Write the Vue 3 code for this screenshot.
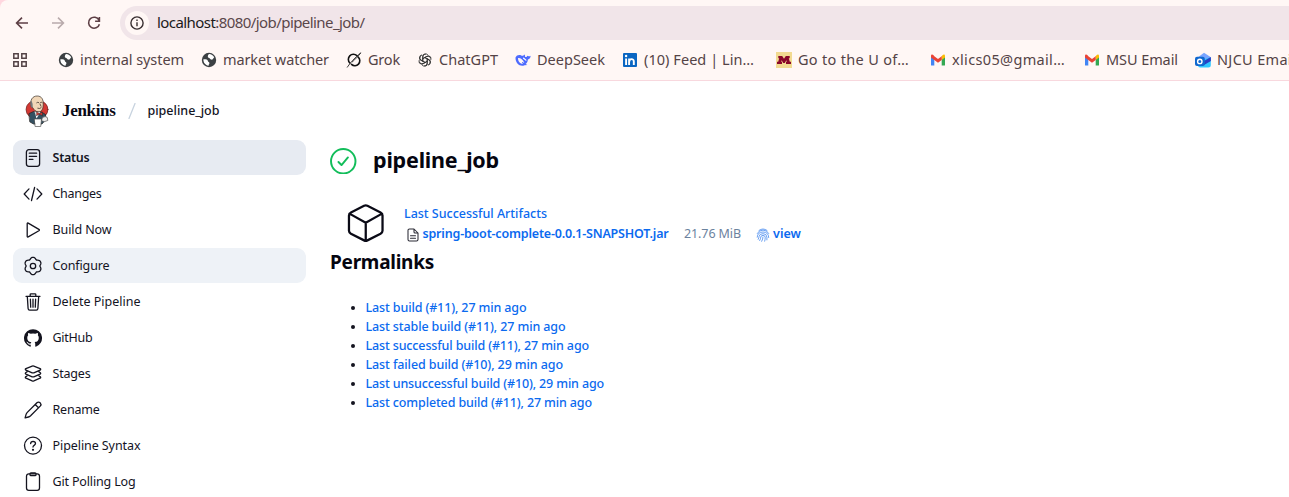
<script setup>
const bookmarks = [
  { icon: 'globe', text: 'internal system', w: 104, step: 143 },
  { icon: 'globe', text: 'market watcher', w: 106, step: 145 },
  { icon: 'grok', text: 'Grok', w: 32, step: 71 },
  { icon: 'gpt', text: 'ChatGPT', w: 59, step: 98 },
  { icon: 'deepseek', text: 'DeepSeek', w: 68, step: 107 },
  { icon: 'linkedin', text: '(10) Feed | Lin…', w: 110, step: 154 },
  { icon: 'umn', text: 'Go to the U of…', w: 111, step: 154 },
  { icon: 'gmail', text: 'xlics05@gmail…', w: 113, step: 154 },
  { icon: 'gmail', text: 'MSU Email', w: 72, step: 111 },
  { icon: 'outlook', text: 'NJCU Email', w: 79, step: 110 },
]
const tasks = [
  { icon: 'status', text: 'Status', w: 37, state: 'active' },
  { icon: 'changes', text: 'Changes', w: 49 },
  { icon: 'play', text: 'Build Now', w: 59 },
  { icon: 'gear', text: 'Configure', w: 57, state: 'hover' },
  { icon: 'trash', text: 'Delete Pipeline', w: 88 },
  { icon: 'github', text: 'GitHub', w: 40 },
  { icon: 'stages', text: 'Stages', w: 38 },
  { icon: 'pen', text: 'Rename', w: 47 },
  { icon: 'help', text: 'Pipeline Syntax', w: 88 },
  { icon: 'clip', text: 'Git Polling Log', w: 83 },
]
const permalinks = [
  { text: 'Last build (#11), 27 min ago', w: 161 },
  { text: 'Last stable build (#11), 27 min ago', w: 200 },
  { text: 'Last successful build (#11), 27 min ago', w: 223.5 },
  { text: 'Last failed build (#10), 29 min ago', w: 197.5 },
  { text: 'Last unsuccessful build (#10), 29 min ago', w: 238.5 },
  { text: 'Last completed build (#11), 27 min ago', w: 226.5 },
]
// Six-lobed outline of the settings cog.
const cog = Array.from({ length: 72 }, (_, i) => {
  const t = (i * Math.PI) / 36
  const r = 7.9 + 0.85 * Math.cos(6 * t) - 0.15 * Math.cos(12 * t)
  return `${(10 + r * Math.sin(t)).toFixed(2)},${(10 - r * Math.cos(t)).toFixed(2)}`
}).join(' ')
// Tracks a label so that it fills the given width.
const vFit = {
  mounted(el, { value }) {
    const natural = el.getBoundingClientRect().width
    el.style.letterSpacing = (value - natural) / el.textContent.length + 'px'
  },
}
</script>

<template>
  <div class="page">
    <header class="chrome">
      <div class="toolbar">
        <svg class="nav" viewBox="0 0 16 16"><path d="M14 8H3M8 2.6 2.6 8 8 13.4" /></svg>
        <svg class="nav dim" viewBox="0 0 16 16"><path d="M2 8h11M8 2.6 13.4 8 8 13.4" /></svg>
        <svg class="nav" viewBox="0 0 16 16"><path d="M13 5.2A5.5 5.5 0 1 0 13.4 9.2M13.4 2v4.3H9.1" /></svg>
        <div class="address">
          <span class="info">
            <svg viewBox="0 0 16 16"><circle cx="8" cy="8" r="6.1" /><path d="M8 7.2v4M8 4.6v1.500" /></svg>
          </span>
          <span v-fit="207.5" class="url"><b>localhost</b>:8080/job/pipeline_job/</span>
        </div>
      </div>
      <nav class="bookmarks">
        <svg class="apps" viewBox="0 0 16 16"><path d="M1.8 1.8h4.4v4.4H1.8zM9.8 1.8h4.4v4.4H9.8zM1.8 9.8h4.4v4.4H1.8zM9.8 9.8h4.4v4.4H9.8z" /></svg>
        <i class="sep"></i>
        <div v-for="(b, i) in bookmarks" :key="i" class="bookmark" :style="{ width: b.step + 'px' }">
          <svg class="fav" viewBox="0 0 16 16">
            <g v-if="b.icon === 'globe'">
              <circle cx="8" cy="8" r="7.2" fill="#3c4043" />
              <path d="M2.4 7.2c2.2-.1 4.200.1 4.400 1.500.2 1.500 1.400.9 1.600 2.200.1 1-.8 1.200-.8 2.800-3.200-.5-5.400-3.200-5.200-6.500ZM8 2.100c2.300 0 4.300 1.300 5.200 3.200-.9 1.300-1.400 2.600-3 2.300-1.300-.2-.9-1.600-2.300-1.700C6.300 5.700 6.500 3.400 8 2.100Z" fill="#fff" />
            </g>
            <g v-else-if="b.icon === 'grok'" fill="none" stroke="#111">
              <path d="M10.900 3.700A4.900 4.900 0 0 0 3.900 11M5.500 12.400A4.900 4.900 0 0 0 12.200 5.100" stroke-width="1.600" />
              <path d="M1.300 15.200C4 11 9 5.500 14.800.8 12.500 4 9.500 7 6.300 9.900" stroke-width=".8" />
            </g>
            <g v-else-if="b.icon === 'gpt'" fill="none" stroke="#333" stroke-width="1">
              <path v-for="a in 6" :key="a" :transform="`rotate(${a * 60} 8 8) translate(.8 .8) scale(.9)`" d="M5.600 9.300V4.300A3.100 3.100 0 0 1 11 2.200M5.700 6.500 9.800 4.100A3.100 3.100 0 0 1 14 5.300" />
            </g>
            <g v-else-if="b.icon === 'deepseek'">
              <path d="M.5 5.500C1.500 3 4.200 2.500 6.200 3.400c1.300.6 2.400.5 3-.9.8.4 1 1.400.8 2.200 1 .8 1.900.4 2.300-.9.9.6 2 .7 3.300-.1-.1 2.200-1 3.300-2.700 3.700-.2 2-1 3.600-2.300 4.700l1.800 1-2.900.1C5.500 15.200.2 11.500.5 5.500Z" fill="#4d6bfe" />
              <path d="M3 6c2.600-.2 4.900 1.300 6.300 4.800-1-.3-1.600-.9-2.300-.9.1 1 .8 1.400 1 2C5.200 11.800 3 9.500 3 6Z" fill="#fff6f5" />
              <path d="m8.600 6.200 2.300 1.900" stroke="#fff" stroke-width="1.200" />
            </g>
            <g v-else-if="b.icon === 'linkedin'">
              <rect x="1" y="1" width="14" height="14" rx="1" fill="#0a66c2" />
              <path d="M4.100 6.400v6.500M7.100 13V6.400M7.200 9.700c0-3.300 4.600-3.500 4.600-.3V13" fill="none" stroke="#fff" stroke-width="1.900" stroke-linecap="butt" />
              <circle cx="4.100" cy="4" r="1.200" fill="#fff" />
            </g>
            <g v-else-if="b.icon === 'umn'">
              <path d="M0 0h16v16H0z" fill="#f2da91" />
              <path d="M2.300 4h3.900L8 6.800 9.800 4h3.900v2.300h-.9l1 3.500h1.200V12h-5V9.800h.8l-.4-1.600L8.800 11H7.200L5.600 8.200l-.4 1.600H6V12H1V9.800h1.200l1-3.500h-.9Z" fill="#8a0829" />
            </g>
            <g v-else-if="b.icon === 'gmail'">
              <path d="M1 4v9q0 .5.6.5h2.700V6.500Z" fill="#4285f4" />
              <path d="M15 4v9q0 .5-.6.500h-2.700V6.500Z" fill="#34a853" />
              <path d="M11.700 4.200v3.700L15 5.400V4c0-1.600-1.400-1.900-2.300-1Z" fill="#fbbc04" />
              <path d="m4.300 4.200 3.700 2.800 3.700-2.800v3.700L8 10.700 4.300 7.900 1 5.400V4c0-1.600 1.400-1.900 2.300-1Z" fill="#ea4335" />
            </g>
            <g v-else>
              <path d="M3 5.200 9 .8l6.200 4v2L9 11 3 8Z" fill="#7aa5ff" />
              <path d="M3 9 15.800 5.300V13q0 2.500-2.500 2.500H5Q3 15.500 3 13Z" fill="#30c7ff" />
              <path d="M8 9.500 15.900 5v4L9 13Z" fill="#293fc4" />
              <rect x="0" y="4.800" width="9.800" height="9.200" rx="2" fill="#1068cf" />
              <circle cx="4.800" cy="9.400" r="2.200" fill="none" stroke="#fff" stroke-width="1.400" />
            </g>
          </svg>
          <span v-fit="b.w">{{ b.text }}</span>
        </div>
      </nav>
    </header>

    <div class="crumbs">
      <svg class="butler" viewBox="0 0 24 32">
        <ellipse cx="12" cy="14.500" rx="11" ry="9.500" fill="#d33833" stroke="#5a2220" stroke-width=".6" />
        <path d="M4.200 18.500 8.500 16.500l8 .5 4 2.500.5 5-4 4.500H8.500L5 27Z" fill="#335061" stroke="#222" stroke-width=".7" />
        <path d="m9.500 16.500 2 7 4-6.500Z" fill="#fff" />
        <path d="M6.200 11.500C4.500 5 7.500 1 12.200 1c4.800 0 6.300 4 6 8.500 0 4.800-1.700 7.300-4.400 7.300-3.300 0-4.700-1.800-6-4Z" fill="#f0d6b7" stroke="#3a302a" stroke-width=".7" />
        <path d="M6.100 5.500C5 8 5.300 11 6.500 12.800l1.300-.6-.2-3.200L7 7Z" fill="#77787b" />
        <path d="M11.700 7.700q1-.9 2-.2M15.500 7.500q1-.7 1.700 0M12.800 13.300q2 .8 3.300-.5M15 9l1 2.200" fill="none" stroke="#3a302a" stroke-width=".8" />
        <path d="m11.500 17 2.800 1.500L17.500 17v3.600l-3.200-1.200L11.500 20.500Z" fill="#d33833" stroke="#222" stroke-width=".5" />
        <path d="M9.500 24h7l-.8 7.500h-5.200Z" fill="#fff" stroke="#555" stroke-width=".7" />
        <path d="M17.500 22.500q3-2 4.800 0l.5 3-3.500 1.200-2.500-1Z" fill="#eee" stroke="#555" stroke-width=".7" />
      </svg>
      <strong v-fit="53.5" class="brand">Jenkins</strong>
      <svg class="slash" viewBox="0 0 8 16"><path d="M7 .5 1 15.500" /></svg>
      <span v-fit="72" class="crumb">pipeline_job</span>
    </div>

    <div class="body">
      <aside class="tasks">
        <a v-for="t in tasks" :key="t.text" class="task" :class="t.state">
          <svg class="task-icon" viewBox="0 0 20 20">
            <g v-if="t.icon === 'status'"><rect x="3.400" y="1.700" width="13.200" height="16.600" rx="2.500" /><path d="M6.300 5.200h7.300M6.300 8.300h7.300M6.300 11.400h3.600" /></g>
            <path v-else-if="t.icon === 'changes'" d="M6 4.900 1.200 10 6 15.100M14 4.900 18.800 10 14 15.100M11.600 3.500 8.500 16.500" />
            <path v-else-if="t.icon === 'play'" d="M4.200 3.700v12.600q0 1 1 .6l10.700-6.200q1-.7 0-1.300L5.200 3.100q-1-.4-1 .6Z" />
            <g v-else-if="t.icon === 'gear'"><circle cx="10" cy="10" r="2.700" /><polygon :points="cog" /></g>
            <path v-else-if="t.icon === 'trash'" d="M3 4.300h14M4.300 4.300l.8 12.200q.1 1.700 1.600 1.700h6.600q1.500 0 1.600-1.700l.8-12.200M7.200 4V2.600q0-.8.8-.8h4q.8 0 .8.800V4M10 7.200v8M7.400 7.200l.3 8M12.600 7.200l-.3 8" />
            <path v-else-if="t.icon === 'github'" class="solid" d="M10 1.200a9 9 0 0 0-2.850 17.540c.450.080.610-.200.610-.430v-1.680c-2.500.540-3.030-1.070-3.030-1.070-.410-1.040-1-1.310-1-1.310-.820-.560.060-.550.060-.550.900.060 1.380.930 1.380.930.800 1.380 2.110.980 2.620.750.080-.580.310-.980.570-1.200-2-.230-4.100-1-4.100-4.450 0-.980.350-1.790.930-2.420-.100-.230-.400-1.140.090-2.380 0 0 .760-.240 2.480.920a8.600 8.600 0 0 1 4.500 0c1.720-1.160 2.470-.920 2.470-.920.500 1.240.190 2.150.100 2.380.570.630.920 1.440.920 2.420 0 3.460-2.100 4.220-4.110 4.440.320.280.610.830.610 1.670v2.470c0 .240.160.520.620.430A9 9 0 0 0 10 1.200Z" />
            <path v-else-if="t.icon === 'stages'" d="M9.200 2.100q.8-.3 1.600 0l6.300 2.500q1.200.7 0 1.600L10.800 8.800q-.8.300-1.600 0L2.900 6.200q-1.200-.9 0-1.600ZM4 7.900l-1.100.6q-1.200.9 0 1.600l6.300 2.700q.8.300 1.600 0l6.300-2.700q1.200-.7 0-1.600L16 7.900M4 12l-1.100.6q-1.200.9 0 1.600l6.300 2.700q.8.300 1.600 0l6.300-2.700q1.200-.7 0-1.600L16 12" />
            <path v-else-if="t.icon === 'pen'" d="M12.200 4.500 4.300 12.400Q3.300 13.500 3 14.600L2.100 17.900 5.400 17Q6.500 16.700 7.600 15.700L17.200 6.100Q18.700 4.500 17.300 2.900 15.500 1.300 13.900 2.800ZM12.200 4.500 15.500 7.800" />
            <g v-else-if="t.icon === 'help'"><circle cx="10" cy="9.600" r="8.500" /><path d="M7.600 7.600q.1-2.300 2.500-2.300 2.300.1 2.400 2 .1 1-1.100 1.800-1.400.8-1.400 2" /><circle class="solid" cx="10" cy="13.800" r="1.100" /></g>
            <g v-else><rect x="3.500" y="1.900" width="13" height="16.500" rx="2.300" /><path d="M7 1.900q0-.9 1-.9h4q1 0 1 .9v.8q0 1-1 1H8q-1 0-1-1Z" /></g>
          </svg>
          <span v-fit="t.w">{{ t.text }}</span>
        </a>
      </aside>

      <main class="main">
        <h1>
          <svg class="ok" viewBox="0 0 26 26"><circle cx="13" cy="13" r="12" /><path d="m8.300 13.700 3 3 6.300-7.400" /></svg>
          <span v-fit="126">pipeline_job</span>
        </h1>
        <section class="artifacts">
          <svg class="cube" viewBox="0 0 38 38"><path d="M17.300 1.500q1.700-.8 3.400 0L34 8.300q2 1.200 2 3v15.500q0 1.800-2 3l-13.300 6.800q-1.700.8-3.400 0L4 29.800q-2-1.200-2-3V11.300q0-1.800 2-3ZM2.500 9.500 19 18.800 35.500 9.500M19 18.800V37" /></svg>
          <div class="files">
            <a v-fit="143">Last Successful Artifacts</a>
            <div class="file">
              <svg class="doc" viewBox="0 0 12 14"><path d="M7 1H2.500Q1 1 1 2.500v9Q1 13 2.500 13h7q1.500 0 1.500-1.500V5ZM7 1v3q0 1 1 1h3M3.500 7.700h5M3.500 10.200h5" /></svg>
              <a v-fit="246" class="jar">spring-boot-complete-0.0.1-SNAPSHOT.jar</a>
              <span v-fit="57" class="size">21.76 MiB</span>
              <svg class="finger" viewBox="0 0 14 14"><path d="M3 2.400Q7-.6 11 2.400M1.200 5.500Q3.200 2 7 2.100 10.800 2 12.800 5.500M1.200 9.200Q1.500 4 7 4q5.600 0 5.700 5.500M2.200 11.300Q3 9.700 3 8.500 3.400 5.700 7 5.700q3.800 0 3.900 3.500v2.700M3.700 12.500Q4.800 10.500 4.800 9q.2-1.600 2.200-1.600T9.200 9.200q0 2.300-.5 4M5.700 13.300Q7 11 7 9" /></svg>
              <a v-fit="28" class="view">view</a>
            </div>
          </div>
        </section>
        <h2><span v-fit="104">Permalinks</span></h2>
        <ul>
          <li v-for="p in permalinks" :key="p.text"><a v-fit="p.w">{{ p.text }}</a></li>
        </ul>
      </main>
    </div>
  </div>
</template>

<style>
html, body { background: #fff; overflow: hidden; }
</style>

<style scoped>
* { box-sizing: border-box; }
.page { height: 497px; overflow: hidden; font-family: "Noto Sans", "Open Sans", sans-serif; color: #14141f; font-size: 12.5px; white-space: nowrap; }
.page span, .page a, .page strong { flex: none; }
svg { flex: none; display: block; fill: none; stroke-linecap: round; stroke-linejoin: round; }
.chrome { height: 81px; background: #fff7f5; border-bottom: 1px solid #f8d8de; border-top-left-radius: 8px; box-shadow: -8px -8px 0 8px #ffd7df; }
.toolbar { display: flex; height: 46px; padding: 6px 0 6px 14px; align-items: center; }
.nav { width: 16px; height: 16px; margin-right: 20px; stroke: #5d3f45; stroke-width: 1.6; stroke-linecap: butt; stroke-linejoin: miter; }
.dim { stroke: #b9aaac; }
.address { flex: 1; height: 34px; margin-left: -2px; padding-left: 5px; display: flex; align-items: center; background: #f1e5e9; border-radius: 17px 0 0 17px; }
.info { width: 24px; height: 24px; display: flex; align-items: center; justify-content: center; background: #fff7f5; border-radius: 50%; margin-right: 8px; }
.info svg { width: 16px; height: 16px; stroke: #382e30; stroke-width: 1.4; stroke-linecap: butt; }
.url { font-size: 15px; line-height: 20px; padding-bottom: 2px; color: #5a474b; }
.url b { font-weight: 400; color: #201a1b; }
.bookmarks { display: flex; align-items: center; height: 28px; padding-left: 12px; overflow: hidden; }
.apps { width: 16px; height: 16px; stroke: #544346; stroke-width: 1.5; stroke-linejoin: miter; }
.sep { width: 2px; height: 16px; background: #ffd5dd; margin: 0 15px 0 14px; }
.bookmark { flex: none; display: flex; align-items: center; gap: 6px; font-size: 14.5px; color: #544346; padding-left: 1px; }
.bookmark span { padding-bottom: 2px; }
.fav { width: 16px; height: 16px; }
.crumbs { display: flex; align-items: center; height: 59px; padding-left: 25px; }
.butler { width: 24px; height: 32px; }
.brand { font: bold 17px "Liberation Serif", serif; margin-left: 13px; color: #090914; }
.slash { width: 8px; height: 16px; margin: 0 12px; stroke: #c8d3df; stroke-width: 1.3; }
.crumb { font-weight: 550; font-size: 12.5px; }
.body { display: flex; gap: 24px; padding-left: 13px; }
.tasks { width: 293px; display: flex; flex-direction: column; gap: 1px; }
.task { height: 35px; display: flex; align-items: center; padding-left: 10px; gap: 9.5px; border-radius: 9px; }
.active { background: #e7ebf2; font-weight: 600; }
.hover { background: #eef2f7; }
.task-icon { width: 20px; height: 20px; stroke: #14141f; stroke-width: 1.3; }
.solid { fill: #14141f; stroke: none; }
.main { flex: 1; }
h1, h2, ul { margin: 0; padding: 0; }
h1 { height: 42px; display: flex; align-items: center; gap: 16.5px; font-size: 21.5px; font-weight: 700; color: #050510; }
h1 span { padding-bottom: 3px; }
.ok { width: 26.5px; height: 26.5px; stroke: #12bd5a; stroke-width: 1.9; }
.artifacts { display: flex; padding: 22px 0 0 17px; height: 106px; }
.cube { width: 37.5px; height: 38px; stroke: #0a0a16; stroke-width: 2.3; }
.files { margin-left: 19.5px; font-weight: 550; }
a { color: #0b6aef; }
.task { color: #14141f; }
.files > a { display: block; width: max-content; line-height: 20px; }
.file { display: flex; height: 20px; line-height: 20px; }
.doc { width: 12px; height: 14px; margin: 4px 3.5px 0 3px; stroke: #2a2a35; stroke-width: 1.05; }
.jar, .view { font-weight: 600; }
.size { margin-left: 15.5px; font-weight: 400; color: #6b829e; }
.finger { width: 14px; height: 14px; margin: 4px 3px 0 15px; stroke: #3a82ee; stroke-width: .75; }
h2 { height: 28px; margin-top: -40px; line-height: 28px; font-size: 19px; color: #050510; }
ul { padding: 22px 0 0 35.5px; }
li { height: 19px; line-height: 19px; font-weight: 550; font-size: 12.5px; }
li::marker { color: #14141f; }
</style>
